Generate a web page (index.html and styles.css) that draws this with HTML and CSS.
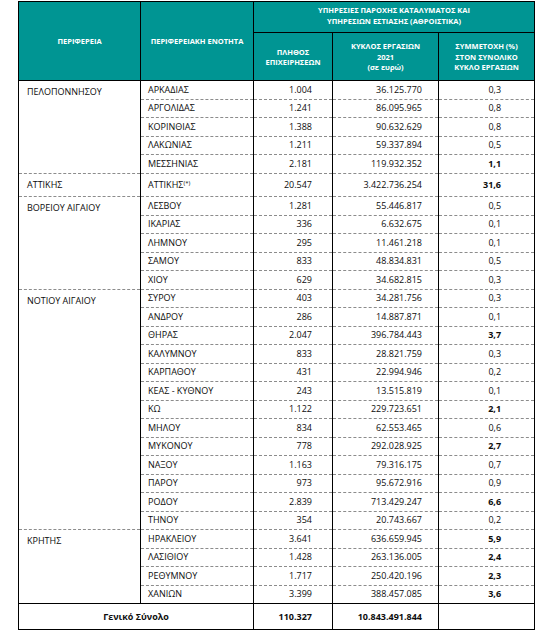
FILE: index.html
```html
<!DOCTYPE html>
<html lang="el">
<head>
  <meta charset="UTF-8">
  <title>Υπηρεσίες παροχής καταλύματος και εστίασης</title>
  <link rel="stylesheet" href="styles.css">
</head>
<body>
  <table class="stats">
    <colgroup>
      <col class="c-region"><col class="c-unit"><col class="c-count"><col class="c-turnover"><col class="c-share">
    </colgroup>
    <thead>
      <tr class="h1">
        <th rowspan="2">ΠΕΡΙΦΕΡΕΙΑ</th>
        <th rowspan="2">ΠΕΡΙΦΕΡΕΙΑΚΗ ΕΝΟΤΗΤΑ</th>
        <th colspan="3" class="group"><div class="clip"><span>ΥΠΗΡΕΣΙΕΣ ΠΑΡΟΧΗΣ ΚΑΤΑΛΥΜΑΤΟΣ ΚΑΙ</span><span>ΥΠΗΡΕΣΙΩΝ ΕΣΤΙΑΣΗΣ (ΑΘΡΟΙΣΤΙΚΑ)</span></div></th>
      </tr>
      <tr class="h2">
        <th>ΠΛΗΘΟΣ<br>ΕΠΙΧΕΙΡΗΣΕΩΝ</th>
        <th>ΚΥΚΛΟΣ ΕΡΓΑΣΙΩΝ<br>2021<br>(σε ευρώ)</th>
        <th>ΣΥΜΜΕΤΟΧΗ (%)<br>ΣΤΟΝ ΣΥΝΟΛΙΚΟ<br>ΚΥΚΛΟ ΕΡΓΑΣΙΩΝ</th>
      </tr>
    </thead>
    <tbody>
      <tr><td class="region" rowspan="5">ΠΕΛΟΠΟΝΝΗΣΟΥ</td><td class="unit">ΑΡΚΑΔΙΑΣ</td><td class="cnt">1.004</td><td class="eur">36.125.770</td><td class="pct">0,3</td></tr>
      <tr><td class="unit">ΑΡΓΟΛΙΔΑΣ</td><td class="cnt">1.241</td><td class="eur">86.095.965</td><td class="pct">0,8</td></tr>
      <tr><td class="unit">ΚΟΡΙΝΘΙΑΣ</td><td class="cnt">1.388</td><td class="eur">90.632.629</td><td class="pct">0,8</td></tr>
      <tr><td class="unit">ΛΑΚΩΝΙΑΣ</td><td class="cnt">1.211</td><td class="eur">59.337.894</td><td class="pct">0,5</td></tr>
      <tr><td class="unit">ΜΕΣΣΗΝΙΑΣ</td><td class="cnt">2.181</td><td class="eur">119.932.352</td><td class="pct hi">1,1</td></tr>

      <tr><td class="region">ΑΤΤΙΚΗΣ</td><td class="unit">ΑΤΤΙΚΗΣ<sup>(*)</sup></td><td class="cnt">20.547</td><td class="eur">3.422.736.254</td><td class="pct hi">31,6</td></tr>

      <tr><td class="region" rowspan="5">ΒΟΡΕΙΟΥ ΑΙΓΑΙΟΥ</td><td class="unit">ΛΕΣΒΟΥ</td><td class="cnt">1.281</td><td class="eur">55.446.817</td><td class="pct">0,5</td></tr>
      <tr><td class="unit">ΙΚΑΡΙΑΣ</td><td class="cnt">336</td><td class="eur">6.632.675</td><td class="pct">0,1</td></tr>
      <tr><td class="unit">ΛΗΜΝΟΥ</td><td class="cnt">295</td><td class="eur">11.461.218</td><td class="pct">0,1</td></tr>
      <tr><td class="unit">ΣΑΜΟΥ</td><td class="cnt">833</td><td class="eur">48.834.831</td><td class="pct">0,5</td></tr>
      <tr><td class="unit">ΧΙΟΥ</td><td class="cnt">629</td><td class="eur">34.682.815</td><td class="pct">0,3</td></tr>

      <tr><td class="region" rowspan="13">ΝΟΤΙΟΥ ΑΙΓΑΙΟΥ</td><td class="unit">ΣΥΡΟΥ</td><td class="cnt">403</td><td class="eur">34.281.756</td><td class="pct">0,3</td></tr>
      <tr><td class="unit">ΑΝΔΡΟΥ</td><td class="cnt">286</td><td class="eur">14.887.871</td><td class="pct">0,1</td></tr>
      <tr><td class="unit">ΘΗΡΑΣ</td><td class="cnt">2.047</td><td class="eur">396.784.443</td><td class="pct hi">3,7</td></tr>
      <tr><td class="unit">ΚΑΛΥΜΝΟΥ</td><td class="cnt">833</td><td class="eur">28.821.759</td><td class="pct">0,3</td></tr>
      <tr><td class="unit">ΚΑΡΠΑΘΟΥ</td><td class="cnt">431</td><td class="eur">22.994.946</td><td class="pct">0,2</td></tr>
      <tr><td class="unit">ΚΕΑΣ - ΚΥΘΝΟΥ</td><td class="cnt">243</td><td class="eur">13.515.819</td><td class="pct">0,1</td></tr>
      <tr><td class="unit">ΚΩ</td><td class="cnt">1.122</td><td class="eur">229.723.651</td><td class="pct hi">2,1</td></tr>
      <tr><td class="unit">ΜΗΛΟΥ</td><td class="cnt">834</td><td class="eur">62.553.465</td><td class="pct">0,6</td></tr>
      <tr><td class="unit">ΜΥΚΟΝΟΥ</td><td class="cnt">778</td><td class="eur">292.028.925</td><td class="pct hi">2,7</td></tr>
      <tr><td class="unit">ΝΑΞΟΥ</td><td class="cnt">1.163</td><td class="eur">79.316.175</td><td class="pct">0,7</td></tr>
      <tr><td class="unit">ΠΑΡΟΥ</td><td class="cnt">973</td><td class="eur">95.672.916</td><td class="pct">0,9</td></tr>
      <tr><td class="unit">ΡΟΔΟΥ</td><td class="cnt">2.839</td><td class="eur">713.429.247</td><td class="pct hi">6,6</td></tr>
      <tr><td class="unit">ΤΗΝΟΥ</td><td class="cnt">354</td><td class="eur">20.743.667</td><td class="pct">0,2</td></tr>

      <tr><td class="region" rowspan="4">ΚΡΗΤΗΣ</td><td class="unit">ΗΡΑΚΛΕΙΟΥ</td><td class="cnt">3.641</td><td class="eur">636.659.945</td><td class="pct hi">5,9</td></tr>
      <tr><td class="unit">ΛΑΣΙΘΙΟΥ</td><td class="cnt">1.428</td><td class="eur">263.136.005</td><td class="pct hi">2,4</td></tr>
      <tr><td class="unit">ΡΕΘΥΜΝΟΥ</td><td class="cnt">1.717</td><td class="eur">250.420.196</td><td class="pct hi">2,3</td></tr>
      <tr><td class="unit">ΧΑΝΙΩΝ</td><td class="cnt">3.399</td><td class="eur">388.457.085</td><td class="pct hi">3,6</td></tr>
    </tbody>
    <tfoot>
      <tr class="total">
        <td colspan="2" class="label">Γενικό Σύνολο</td>
        <td class="cnt">110.327</td>
        <td class="eur">10.843.491.844</td>
        <td class="pct"></td>
      </tr>
    </tfoot>
  </table>
</body>
</html>
```

FILE: styles.css
```css
body { margin: 0; background: #fff; font-family: "Open Sans", "Noto Sans", sans-serif; color: #0d0d0d; }

.stats {
  border-collapse: collapse;
  table-layout: fixed;
  width: 516px;
  margin: 1px 0 0 18px;
  border: 1px solid #000;
  font-size: 9px;
  font-weight: 500;
}
.c-region { width: 122px; }
.c-unit { width: 113px; }
.c-count { width: 79px; }
.c-turnover { width: 106px; }
.c-share { width: 96px; }

th {
  background: #009593;
  color: #fff;
  font-weight: 700;
  font-size: 7.5px;
  line-height: 10.5px;
  border: 1px solid #000;
  padding: 0;
  text-align: center;
  vertical-align: middle;
}
.h1 { height: 31px; }
.h2 { height: 48px; }
.h2 th { padding-top: 1px; }
th.group { vertical-align: top; }
.clip {
  height: 19px;
  margin-top: 6px;
  overflow: hidden;
  display: flex;
  flex-direction: column;
  justify-content: flex-end;
  line-height: 11px;
}

td {
  border-left: 1px solid #000;
  border-right: 1px solid #000;
  border-bottom: 1px dashed #8c8c8c;
  padding: 0;
  height: 17.5px;
  line-height: 12px;
  white-space: nowrap;
}
td.region { vertical-align: top; padding: 5px 0 0 8px; }
td.unit { padding-left: 7px; }
td.cnt { text-align: right; padding-right: 20px; }
td.eur { text-align: right; padding-right: 16px; }
td.pct { text-align: right; padding-right: 33px; }
td.hi { font-weight: 700; }
sup { font-size: 6px; vertical-align: 3px; line-height: 0; }

.total td { border-top: 1px solid #000; border-bottom: 1px solid #000; height: 25px; font-weight: 700; }
.total td.label { text-align: center; }
```
